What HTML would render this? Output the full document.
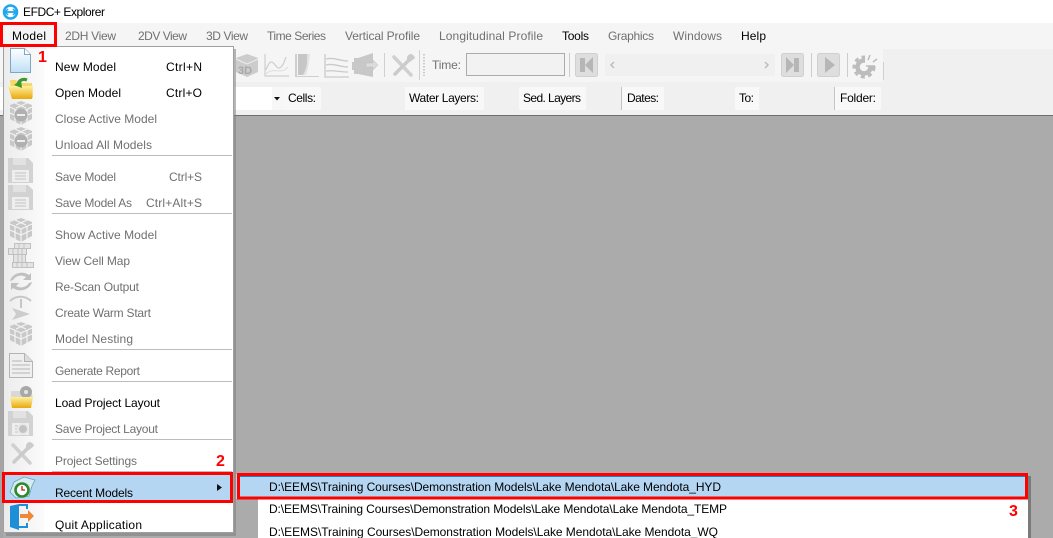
<!DOCTYPE html>
<html><head><meta charset="utf-8"><style>
html,body{margin:0;padding:0;width:1053px;height:538px;overflow:hidden;background:#ababab}
svg{display:block}
text{font-family:"Liberation Sans",sans-serif;font-size:12px;fill:#000}
.g{fill:#707070}.m{fill:#707070}
.n{font-size:16px;font-weight:bold;fill:#ff0000}
</style></head><body>
<svg width="1053" height="538" viewBox="0 0 1053 538" xmlns="http://www.w3.org/2000/svg">
<defs>
<linearGradient id="gut" x1="0" x2="1" y1="0" y2="0"><stop offset="0" stop-color="#ececec"/><stop offset="1" stop-color="#fbfbfb"/></linearGradient>
<linearGradient id="doc" x1="0" x2="0" y1="0" y2="1"><stop offset="0" stop-color="#fff"/><stop offset="1" stop-color="#bfe0f6"/></linearGradient>
<linearGradient id="fold" x1="0" x2="0" y1="0" y2="1"><stop offset="0" stop-color="#fff0a0"/><stop offset="1" stop-color="#e8a90c"/></linearGradient>
<g id="cube"><path d="M12 0l11 4v14l-11 6-11-6V4z" fill="#c8c8c8"/><path d="M1 6l11 5 11-5M12 11v13M6 2l11 5M18 2L7 7M1 12l11 5 11-5M6 8v13M18 8v13" stroke="#f4f4f4" stroke-width="1.200" fill="none"/></g>
<g id="cubeminus"><use href="#cube"/><circle cx="12" cy="14" r="6.500" fill="#b0b0b0"/><rect x="8" y="13" width="8" height="2" fill="#eee"/></g>
<g id="disk"><path d="M0 0h20l5 5v20H0z" fill="#d2d2d2"/><rect x="5" y="0" width="13" height="7" fill="#e2e2e2"/><rect x="4" y="12" width="17" height="12" fill="#eeeeee"/><path d="M7 15h11M7 18h11M7 21h11" stroke="#c2c2c2"/></g>
<g id="tools" fill="none" stroke-linecap="round"><path d="M3 3l17 18" stroke="#d0d0d0" stroke-width="3.500"/><path d="M19 5L4 20" stroke="#cbcbcb" stroke-width="3.500"/><path d="M19 0a5 5 0 0 0-3 6l3 2 5-4a5 5 0 0 0-5-4z" fill="#cbcbcb"/></g>
</defs>

<!-- title bar -->
<rect width="1053" height="23" fill="#fff"/>
<circle cx="10.500" cy="12" r="6.500" fill="none" stroke="#1ea7ee" stroke-width="2.500"/>
<path d="M5 12h11" stroke="#1ea7ee" stroke-width="1.800"/><path d="M8 9l-3 3 3 3M13 9l3 3-3 3" stroke="#1ea7ee" stroke-width="1.500" fill="none"/>
<text x="23" y="16" textLength="82" lengthAdjust="spacing">EFDC+ Explorer</text>

<!-- menu bar -->
<rect y="23" width="1053" height="26" fill="#f5f5f5"/>
<text x="12" y="40" textLength="34">Model</text>
<text x="65" y="40" textLength="51" class="m">2DH View</text>
<text x="138" y="40" textLength="49" class="m">2DV View</text>
<text x="206" y="40" textLength="42" class="m">3D View</text>
<text x="267" y="40" textLength="59" class="m">Time Series</text>
<text x="345" y="40" textLength="75" class="m">Vertical Profile</text>
<text x="439" y="40" textLength="104" class="m">Longitudinal Profile</text>
<text x="562" y="40" textLength="27">Tools</text>
<text x="608" y="40" textLength="46" class="m">Graphics</text>
<text x="673" y="40" textLength="49" class="m">Windows</text>
<text x="741" y="40" textLength="25">Help</text>

<!-- toolbar -->
<rect y="49" width="1053" height="33" fill="#f0f0f0"/>
<rect y="49" width="883" height="33" fill="#f5f5f5"/>
<rect x="883" y="62" width="1" height="18" fill="#d0d0d0"/>
<g transform="translate(235,54)"><path d="M12 0l11 4v14l-11 5-11-5V4z" fill="#cccccc"/><path d="M1 5l11 5 11-5" stroke="#eee" fill="none"/><text x="3" y="20" style="font-size:11px;font-weight:bold;fill:#a8a8a8">3D</text></g>
<path d="M265 54v22h24" fill="none" stroke="#cfcfcf" stroke-width="1.200"/><path d="M266 70c4-12 7-8 10-4s6 3 10-9" fill="none" stroke="#cfcfcf" stroke-width="1.200"/><path d="M266 74c5-5 10-3 14-3s6-2 8-4" fill="none" stroke="#dcdcdc"/>
<path d="M295 54h2v22h22v1h-24z" fill="#cfcfcf"/><path d="M298 54h9c1 9-1 17-4 21h-5z" fill="#c6c6c6"/><path d="M307 54h3c-1 8-2 16-4 21h-3c3-5 5-12 4-21" fill="#e2e2e2"/>
<path d="M325 54v23h24M326 59c8-2 14 2 22 2M326 65c8-2 14 2 22 2M326 71c8-1 14 1 22 1" fill="none" stroke="#cacaca" stroke-width="1.300"/>
<path d="M358 58l15-5v24l-15-3h-4v-4h-2v-8h2v-4z" fill="#c8c8c8"/><path d="M366 63h7v-3l5 5-5 5v-3h-7z" fill="#dcdcdc" stroke="#bcbcbc" stroke-width=".5"/>
<rect x="384" y="53" width="1" height="24" fill="#d0d0d0"/>
<use href="#tools" transform="translate(391,54)"/>
<rect x="419" y="50" width="1" height="30" fill="#d0d0d0"/>
<path d="M424 54v22" stroke="#bcbcbc" stroke-dasharray="1.500 1.500" stroke-width="1.500"/>
<text x="432" y="69" textLength="29" class="m">Time:</text>
<rect x="466.500" y="53.500" width="98" height="22" fill="#f2f2f2" stroke="#ababab"/>
<rect x="569" y="53" width="1" height="24" fill="#cccccc"/>
<rect x="575.500" y="53.500" width="22" height="23" rx="2" fill="#dedede" stroke="#d0d0d0"/>
<path d="M580 58h5v14h-5zM593 57v16l-8-8z" fill="#b6b6b6"/>
<rect x="605" y="54" width="170" height="22" fill="#f0f0f0"/>
<path d="M614 62l-3 3 3 3M765 62l3 3-3 3" fill="none" stroke="#bdbdbd" stroke-width="1.500"/>
<rect x="781.500" y="53.500" width="22" height="23" rx="2" fill="#dedede" stroke="#d0d0d0"/>
<path d="M786 57v16l8-8zM794 58h5v14h-5z" fill="#b6b6b6"/>
<rect x="811" y="53" width="1" height="24" fill="#cccccc"/>
<rect x="817.500" y="53.500" width="22" height="23" rx="2" fill="#dedede" stroke="#d0d0d0"/>
<path d="M825 57v16l10-8z" fill="#b6b6b6"/>
<rect x="847" y="53" width="1" height="24" fill="#cccccc"/>
<circle cx="864" cy="67" r="10" fill="none" stroke="#bcbcbc" stroke-width="3" stroke-dasharray="4 3.400"/>
<circle cx="864" cy="67" r="6.500" fill="none" stroke="#bcbcbc" stroke-width="4.500"/>
<path d="M865 66h13v-13h-13z" fill="#f5f5f5"/><path d="M866 66h9M868 60l2-5M873 62l4-3" stroke="#bcbcbc" stroke-width="1.500"/>

<!-- info row -->
<rect y="82" width="1053" height="33" fill="#f0f0f0"/>
<rect y="87" width="272" height="23" fill="#fff"/>
<rect x="272" y="87" width="12" height="23" fill="#f7f7f7"/>
<path d="M274 97h6l-3 3.500z" fill="#111"/>
<rect x="284" y="87" width="37" height="23" fill="#f8f8f8"/>
<text x="288" y="102" textLength="28">Cells:</text>
<rect x="405" y="87" width="79" height="23" fill="#f8f8f8"/>
<text x="409" y="102" textLength="70">Water Layers:</text>
<rect x="519" y="87" width="67" height="23" fill="#f8f8f8"/>
<text x="523" y="102" textLength="58">Sed. Layers</text>
<rect x="621" y="87" width="1" height="23" fill="#c4c4c4"/>
<rect x="622" y="87" width="42" height="23" fill="#f8f8f8"/>
<text x="627" y="102" textLength="32">Dates:</text>
<rect x="735" y="87" width="24" height="23" fill="#f8f8f8"/>
<text x="739" y="102" textLength="15">To:</text>
<rect x="834" y="87" width="1" height="23" fill="#c4c4c4"/>
<rect x="835" y="87" width="46" height="23" fill="#f8f8f8"/>
<text x="840" y="102" textLength="36">Folder:</text>
<rect y="115" width="1053" height="1" fill="#6e6e6e"/>

<!-- main -->
<rect y="116" width="1053" height="422" fill="#ababab"/>
<rect x="0" y="116" width="3" height="422" fill="#a4a4a4"/>

<!-- menu popup -->
<rect x="6" y="49" width="230" height="487" fill="#7e7e7e" opacity=".55"/>
<rect x="3.500" y="46.500" width="230" height="486" fill="#fff" stroke="#a0a0a0"/>
<rect x="4" y="47" width="40" height="485" fill="url(#gut)"/>
<g fill="#bcbcbc"><rect x="52" y="155" width="180" height="1"/><rect x="52" y="213" width="180" height="1"/><rect x="52" y="349" width="180" height="1"/><rect x="52" y="381" width="180" height="1"/><rect x="52" y="439" width="180" height="1"/><rect x="52" y="471" width="180" height="1"/></g>

<text x="55" y="71" textLength="61">New Model</text><text x="166" y="71" textLength="36">Ctrl+N</text>
<text x="55" y="97" textLength="66">Open Model</text><text x="166" y="97" textLength="36">Ctrl+O</text>
<text x="55" y="123" textLength="102" class="g">Close Active Model</text>
<text x="55" y="149" textLength="97" class="g">Unload All Models</text>
<text x="55" y="181" textLength="61" class="g">Save Model</text><text x="169" y="181" textLength="33" class="g">Ctrl+S</text>
<text x="55" y="207" textLength="77" class="g">Save Model As</text><text x="146" y="207" textLength="56" class="g">Ctrl+Alt+S</text>
<text x="55" y="239" textLength="102" class="g">Show Active Model</text>
<text x="55" y="265" textLength="75" class="g">View Cell Map</text>
<text x="55" y="291" textLength="84" class="g">Re-Scan Output</text>
<text x="55" y="317" textLength="96" class="g">Create Warm Start</text>
<text x="55" y="343" textLength="78" class="g">Model Nesting</text>
<text x="55" y="375" textLength="85" class="g">Generate Report</text>
<text x="55" y="407" textLength="105">Load Project Layout</text>
<text x="55" y="433" textLength="103" class="g">Save Project Layout</text>
<text x="55" y="465" textLength="82" class="g">Project Settings</text>

<!-- menu icons -->
<path d="M10.500 48.500h14l6 6v18h-20z" fill="url(#doc)" stroke="#7fa6c4"/><path d="M24.500 48.500v6h6" fill="#fff" stroke="#7fa6c4"/>
<path d="M10 80h6l2 3h14l1 15H12z" fill="#f5d76a"/><path d="M8 86h25l-1 13H12z" fill="url(#fold)"/>
<path d="M18 86c0-5 4-8 9-6" fill="none" stroke="#3d9a2c" stroke-width="3.200"/><path d="M22 88l-8-3 7-5z" fill="#3d9a2c"/>
<use href="#cubeminus" transform="translate(9,101)"/>
<use href="#cubeminus" transform="translate(9,127)"/>
<use href="#disk" transform="translate(8,158)"/>
<use href="#disk" transform="translate(8,185)"/>
<use href="#cube" transform="translate(9,218)"/>
<path d="M14.500 243.500h16v5h-16zM8.500 248.500h18v6h-18zM13.500 254.500h12v8h-12zM12.500 262.500h21v5h-21z" fill="#e4e4e4" stroke="#b4b4b4" stroke-width=".8"/>
<path d="M19 243v5M24 243v5M13 248v6M18 248v6M22 248v6M18 255v8M22 255v8M17 262v5M22 262v5M27 262v5" stroke="#b4b4b4" stroke-width=".7" fill="none"/>
<path d="M13 280a9 8 0 0 1 13-3l-3 3h8v-7l-2 2a12 11 0 0 0-19 6z" fill="#c0c0c0"/><path d="M29 283a9 8 0 0 1-13 3l3-3h-8v7l2-2a12 11 0 0 0 19-6z" fill="#c0c0c0"/>
<path d="M10 301a15 15 0 0 1 21 0" fill="none" stroke="#c8c8c8" stroke-width="2"/><path d="M21 299v9" stroke="#9a9a9a"/><path d="M12 308l18 6-18 6 4-6z" fill="#cccccc"/>
<use href="#cube" transform="translate(9,322)"/>
<path d="M9.500 353.500h15l8 8v16h-23z" fill="#efefef" stroke="#b4b4b4"/><path d="M24.500 353.500v8h8" fill="#dcdcdc" stroke="#b4b4b4"/><path d="M12 361h10M12 365h18M12 369h18M12 373h18" stroke="#b4b4b4"/>
<path d="M11 391h9l2 3h10l1 4H11z" fill="#d8d8d8"/><circle cx="26" cy="392" r="6" fill="#a8a8a8"/><circle cx="26" cy="392" r="2" fill="#e4e4e4"/><path d="M10 397h23l-2 11H12z" fill="url(#fold)"/>
<use href="#disk" transform="translate(8,411)"/><circle cx="23" cy="429" r="5" fill="#c2c2c2" stroke="#e8e8e8" stroke-width="2"/>
<use href="#tools" transform="translate(10,442)"/>

<!-- recent models row -->
<rect x="4" y="473" width="229" height="29" fill="#b5d6f2"/>
<rect x="3.500" y="473.500" width="228" height="28" fill="none" stroke="#ff0000" stroke-width="3"/>
<path d="M14 482l10-5 11 3-3 6-3 10-13 2-6-6z" fill="#d8eaf2" stroke="#6ba0b8" stroke-width=".8"/>
<circle cx="22" cy="490" r="6.500" fill="#fff" stroke="#2d8a2c" stroke-width="2.600"/><path d="M22 486v4h3" stroke="#b32020" stroke-width="1.300" fill="none"/>
<text x="55" y="497" textLength="78">Recent Models</text>
<path d="M217 484l5 3.500-5 3.500z" fill="#111"/>
<path d="M10 506l9-2v26l-9-3z" fill="#1c8fd6"/><path d="M19 505h8v4M27 523v4h-8" fill="none" stroke="#1c8fd6" stroke-width="2"/><path d="M20 514h8v-4l6 6-6 6v-4h-8z" fill="#f0883a"/>
<text x="55" y="529" textLength="87">Quit Application</text>

<!-- submenu -->
<rect x="1028" y="476" width="3" height="62" fill="#7a7a7a"/>
<rect x="258" y="499" width="770" height="39" fill="#fff"/>
<rect x="236" y="474" width="792" height="25" fill="#b5d6f2"/>
<rect x="238.500" y="474.500" width="788" height="23.500" fill="none" stroke="#ff0000" stroke-width="3"/>
<rect x="240" y="476" width="785" height="1" fill="#1e7fd8"/>
<text x="269" y="491" textLength="452">D:\EEMS\Training Courses\Demonstration Models\Lake Mendota\Lake Mendota_HYD</text>
<text x="269" y="513" textLength="458">D:\EEMS\Training Courses\Demonstration Models\Lake Mendota\Lake Mendota_TEMP</text>
<text x="269" y="536" textLength="449">D:\EEMS\Training Courses\Demonstration Models\Lake Mendota\Lake Mendota_WQ</text>

<!-- annotations -->
<rect x="1.500" y="23.500" width="54" height="22" fill="none" stroke="#ff0000" stroke-width="3"/>
<text x="38" y="62" class="n">1</text>
<text x="216" y="466" class="n">2</text>
<text x="1009" y="516" class="n">3</text>
</svg>
</body></html>
